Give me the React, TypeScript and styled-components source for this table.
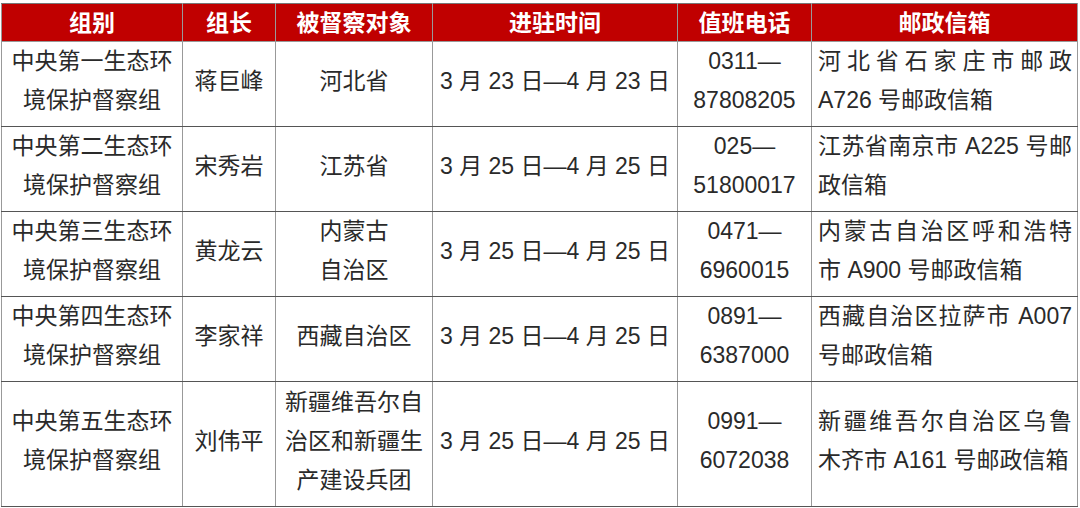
import styled, { createGlobalStyle } from "styled-components";

const GlobalStyle = createGlobalStyle`
  html, body {
    margin: 0;
    padding: 0;
    background: #fff;
  }
  body {
    font-family: "Liberation Sans", "Noto Sans CJK SC", sans-serif;
  }
`;

const Page = styled.div`
  padding: 3px 0 0 1px;
`;

const Table = styled.table`
  width: 1076px;
  border-collapse: collapse;
  table-layout: fixed;
  color: #2a2a2a;
  font-size: 23px;
`;

const HeadCell = styled.th`
  height: 37px;
  padding: 0;
  background: #c00000;
  color: #fff;
  font-weight: 700;
  font-size: 23px;
  line-height: 36px;
  text-align: center;
  border: 1px solid #999;
  border-top-color: #777;
`;

const Row = styled.tr<{ $h: number }>`
  height: ${({ $h }) => $h}px;
`;

const Cell = styled.td<{ $left?: boolean }>`
  padding: ${({ $left }) => ($left ? "0 5px 6px 6px" : "0 2px 6px")};
  text-align: ${({ $left }) => ($left ? "left" : "center")};
  vertical-align: middle;
  line-height: 39px;
  border-left: 1px solid #999;
  border-right: 1px solid #999;
  border-bottom: 1px solid #555;
  white-space: nowrap;
  overflow: hidden;
`;

const Line = styled.div<{ $spread?: boolean }>`
  text-align: ${({ $spread }) => ($spread ? "justify" : "left")};
  text-align-last: ${({ $spread }) => ($spread ? "justify" : "left")};
  text-justify: inter-character;
  white-space: normal;
`;

const cols = [181, 93, 157, 245, 134, 266];
const heads = ["组别", "组长", "被督察对象", "进驻时间", "值班电话", "邮政信箱"];

type Group = {
  name: string;
  leader: string;
  target: string[];
  period: string;
  phone: [string, string];
  box: [string, string];
  h: number;
};

const groups: Group[] = [
  {
    name: "中央第一生态环",
    leader: "蒋巨峰",
    target: ["河北省"],
    period: "3 月 23 日—4 月 23 日",
    phone: ["0311—", "87808205"],
    box: ["河北省石家庄市邮政", "A726 号邮政信箱"],
    h: 85,
  },
  {
    name: "中央第二生态环",
    leader: "宋秀岩",
    target: ["江苏省"],
    period: "3 月 25 日—4 月 25 日",
    phone: ["025—", "51800017"],
    box: ["江苏省南京市 A225 号邮", "政信箱"],
    h: 84,
  },
  {
    name: "中央第三生态环",
    leader: "黄龙云",
    target: ["内蒙古", "自治区"],
    period: "3 月 25 日—4 月 25 日",
    phone: ["0471—", "6960015"],
    box: ["内蒙古自治区呼和浩特", "市 A900 号邮政信箱"],
    h: 84,
  },
  {
    name: "中央第四生态环",
    leader: "李家祥",
    target: ["西藏自治区"],
    period: "3 月 25 日—4 月 25 日",
    phone: ["0891—", "6387000"],
    box: ["西藏自治区拉萨市 A007", "号邮政信箱"],
    h: 84,
  },
  {
    name: "中央第五生态环",
    leader: "刘伟平",
    target: ["新疆维吾尔自", "治区和新疆生", "产建设兵团"],
    period: "3 月 25 日—4 月 25 日",
    phone: ["0991—", "6072038"],
    box: ["新疆维吾尔自治区乌鲁", "木齐市 A161 号邮政信箱"],
    h: 125,
  },
];

export default function App() {
  return (
    <Page>
      <GlobalStyle />
      <Table>
        <colgroup>
          {cols.map((w, i) => (
            <col key={i} style={{ width: w }} />
          ))}
        </colgroup>
        <thead>
          <tr>
            {heads.map((h) => (
              <HeadCell key={h}>{h}</HeadCell>
            ))}
          </tr>
        </thead>
        <tbody>
          {groups.map((g) => (
            <Row key={g.leader} $h={g.h}>
              <Cell>
                {g.name}
                <br />
                境保护督察组
              </Cell>
              <Cell>{g.leader}</Cell>
              <Cell>
                {g.target.map((t, i) => (
                  <div key={i}>{t}</div>
                ))}
              </Cell>
              <Cell>{g.period}</Cell>
              <Cell>
                {g.phone[0]}
                <br />
                {g.phone[1]}
              </Cell>
              <Cell $left>
                <Line $spread>{g.box[0]}</Line>
                <Line>{g.box[1]}</Line>
              </Cell>
            </Row>
          ))}
        </tbody>
      </Table>
    </Page>
  );
}
